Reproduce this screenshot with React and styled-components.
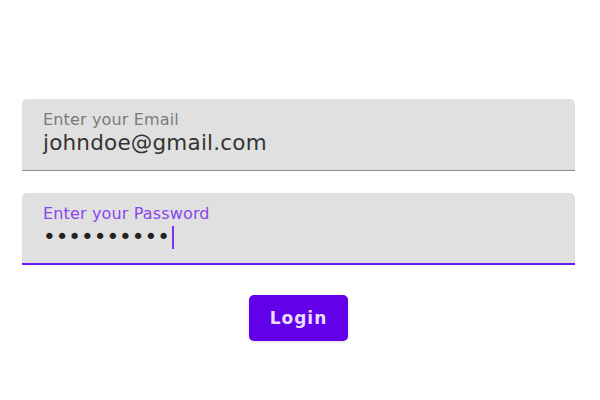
import React from "react";
import styled, { createGlobalStyle } from "styled-components";

const GlobalStyle = createGlobalStyle`
  body {
    margin: 0;
    background: #ffffff;
    font-family: "DejaVu Sans", "Liberation Sans", sans-serif;
  }
`;

const Page = styled.div`
  width: 600px;
  height: 400px;
  padding: 99px 25px 0 22px;
  box-sizing: border-box;
  display: flex;
  flex-direction: column;
`;

const Form = styled.form`
  display: flex;
  flex-direction: column;
  gap: 22px;
`;

const Field = styled.div`
  height: 72px;
  box-sizing: border-box;
  background: #e0e0e0;
  border-radius: 5px 5px 0 0;
  border-bottom: ${(p) => (p.focused ? "2px solid #6a1cf0" : "1px solid #8c8c8c")};
  padding: 11px 21px 0 21px;
  display: flex;
  flex-direction: column;
`;

const Label = styled.label`
  font-size: 16px;
  line-height: 20px;
  letter-spacing: 0.15px;
  color: ${(p) => (p.focused ? "#8a46f0" : "#7a7a7a")};
`;

const Value = styled.div`
  font-size: 21.5px;
  line-height: 26px;
  letter-spacing: 0.2px;
  color: #333333;
  display: flex;
  align-items: center;
`;

const Dots = styled.span`
  color: #222222;
  letter-spacing: 0;
`;

const Caret = styled.span`
  display: inline-block;
  width: 2px;
  height: 23px;
  margin-left: 2px;
  background: #7b2ff2;
`;

const Actions = styled.div`
  display: flex;
  justify-content: center;
  padding-top: 8px;
`;

const Button = styled.button`
  width: 99px;
  height: 46px;
  border: none;
  border-radius: 5px;
  background: #6200ea;
  color: #eadcff;
  font-family: "DejaVu Sans", sans-serif;
  font-weight: bold;
  font-size: 17px;
  letter-spacing: 1px;
  cursor: pointer;
  box-shadow: 0 1px 3px rgba(0, 0, 0, 0.15);
`;

export default function App() {
  return (
    <>
      <GlobalStyle />
      <Page>
        <Form onSubmit={(e) => e.preventDefault()}>
          <Field>
            <Label>Enter your Email</Label>
            <Value>johndoe@gmail.com</Value>
          </Field>
          <Field focused>
            <Label focused>Enter your Password</Label>
            <Value>
              <Dots>{"\u2022".repeat(10)}</Dots>
              <Caret />
            </Value>
          </Field>
          <Actions>
            <Button type="submit">Login</Button>
          </Actions>
        </Form>
      </Page>
    </>
  );
}
